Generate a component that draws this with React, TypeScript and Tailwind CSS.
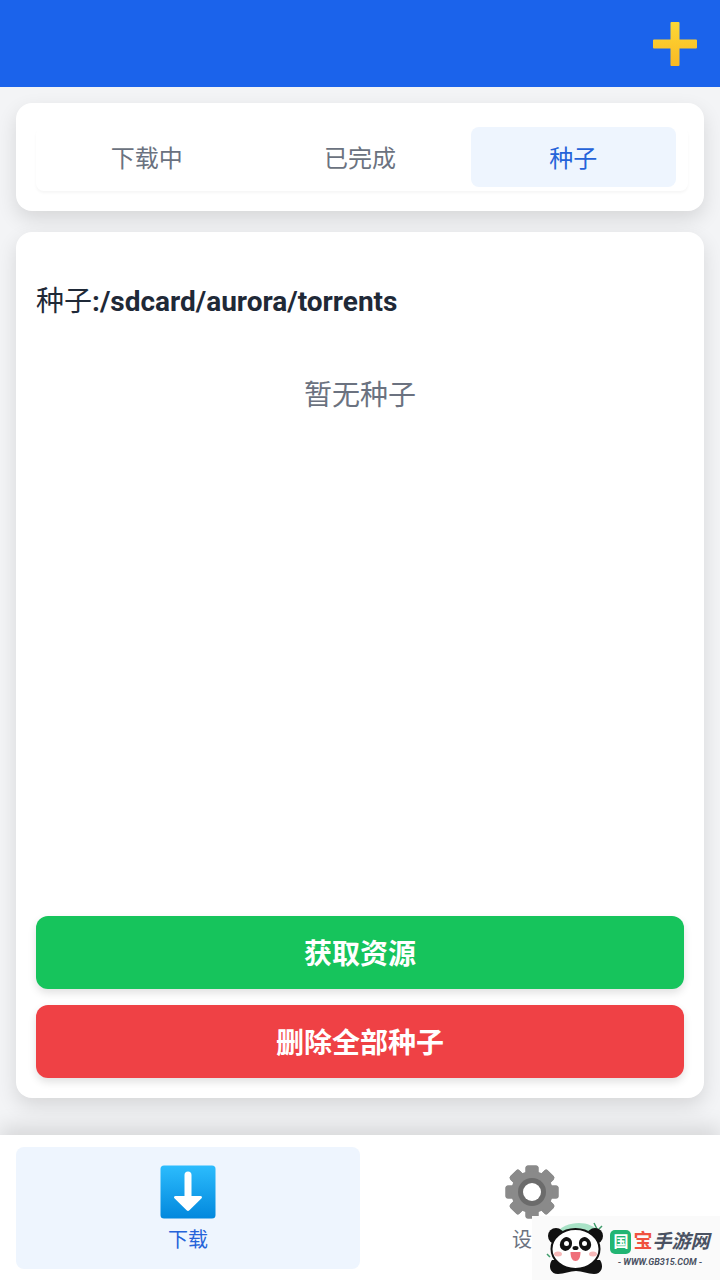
import React from "react";

const PlusIcon = () => (
    <svg width="46" height="46" viewBox="0 0 46 46">
        <defs>
            <linearGradient id="plusFill" x1="0" y1="0" x2="0" y2="1">
                <stop offset="0" stopColor="#fdd835" />
                <stop offset="1" stopColor="#f9b923" />
            </linearGradient>
        </defs>
        <path d="M19.500 1h7a1 1 0 0 1 1 1v16.500H44a1 1 0 0 1 1 1v7a1 1 0 0 1-1 1H27.500V44a1 1 0 0 1-1 1h-7a1 1 0 0 1-1-1V27.500H2a1 1 0 0 1-1-1v-7a1 1 0 0 1 1-1h16.500V2a1 1 0 0 1 1-1z" fill="url(#plusFill)" />
    </svg>
);

const DownloadIcon = () => (
    <svg width="56" height="54" viewBox="0 0 56 54">
        <defs>
            <linearGradient id="dlFill" x1="0" y1="0" x2="0" y2="1">
                <stop offset="0" stopColor="#2cbcfd" />
                <stop offset="1" stopColor="#0288dd" />
            </linearGradient>
        </defs>
        <rect x="0.500" y="0.500" width="55" height="53" rx="3.500" fill="url(#dlFill)" />
        <path d="M24.500 10a3.500 3.500 0 0 1 7 0v21h9c1.300 0 2 1.300 1.100 2.300L29.400 45.200a2 2 0 0 1-2.800 0L14.400 33.300c-.9-1-.2-2.300 1.100-2.300h9z" fill="#ffffff" />
    </svg>
);

const GearIcon = () => (
    <svg width="54" height="54" viewBox="0 0 54 54">
        <g fill="#8a8a8a">
            {[0, 45, 90, 135, 180, 225, 270, 315].map((r) => (
                <rect key={r} x="20.500" y="0.500" width="13" height="53" rx="2.500" transform={`rotate(${r} 27 27)`} />
            ))}
            <circle cx="27" cy="27" r="21" />
        </g>
        <circle cx="27" cy="27" r="14" fill="#6b6b6b" />
        <circle cx="27" cy="27" r="9" fill="#ffffff" />
    </svg>
);

const Panda = () => (
    <svg width="62" height="56" viewBox="0 0 62 56">
        <path d="M8 14C14 4 24 1 33 1c8 0 16 3 22 10l-6 10H12z" fill="#a8e2c6" />
        <path d="M48 1l3 6M56 4l-3 3" stroke="#3f9c6b" strokeWidth="1.500" fill="none" />
        <path d="M1 32l3 3" stroke="#3f9c6b" strokeWidth="1.500" fill="none" />
        <circle cx="10" cy="14" r="8" fill="#111111" />
        <circle cx="49" cy="14" r="8" fill="#111111" />
        <path d="M6 38c-4 6-2 14 6 14 6 0 12-3 18-3s12 3 18 3c8 0 10-8 6-14z" fill="#111111" />
        <ellipse cx="29.500" cy="27" rx="24" ry="20" fill="#ffffff" stroke="#111111" strokeWidth="2" />
        <ellipse cx="20" cy="22" rx="6" ry="7" fill="#111111" transform="rotate(20 20 22)" />
        <ellipse cx="39" cy="22" rx="6" ry="7" fill="#111111" transform="rotate(-20 39 22)" />
        <circle cx="20.500" cy="21.500" r="2.500" fill="#ffffff" />
        <circle cx="38.500" cy="21.500" r="2.500" fill="#ffffff" />
        <ellipse cx="29.500" cy="26" rx="3" ry="2" fill="#111111" />
        <path d="M24.500 30h10c0 6-2 9-5 9s-5-3-5-9z" fill="#ef6f7a" />
        <ellipse cx="12" cy="32" rx="4" ry="2.500" fill="#f7b8b8" />
        <ellipse cx="47" cy="32" rx="4" ry="2.500" fill="#f7b8b8" />
    </svg>
);

const App: React.FC = () => {
    return (
        <div className="relative flex h-[1280px] w-[720px] flex-col overflow-hidden bg-[#f3f4f6] font-['Roboto','Noto_Sans_CJK_SC',sans-serif]">
            <header className="flex h-[87px] shrink-0 items-start justify-end bg-[#1b63eb] pt-[21px] pr-[22px]">
                <PlusIcon />
            </header>

            <main className="flex min-h-0 flex-1 flex-col gap-[21px] px-4 pt-4">
                <section className="h-[108px] shrink-0 rounded-2xl bg-white px-5 pt-6 shadow-[0_8px_20px_rgba(0,0,0,0.12)]">
                    <div className="-mr-1 grid h-[64px] grid-cols-3 rounded-lg pr-2 pb-1 pl-1 shadow-[0_2px_3px_rgba(0,0,0,0.04)]">
                        <div className="flex items-center justify-center pt-[3px] text-2xl text-[#6b7280]">下载中</div>
                        <div className="flex items-center justify-center pt-[3px] text-2xl text-[#6b7280]">已完成</div>
                        <div className="mx-1 flex items-center justify-center rounded-lg bg-[#eef5fe] pt-[3px] text-2xl text-[#2563d9]">种子</div>
                    </div>
                </section>

                <section className="flex h-[866px] shrink-0 flex-col rounded-2xl bg-white px-5 pt-[51px] pb-5 shadow-[0_8px_20px_rgba(0,0,0,0.12)]">
                    <h2 className="text-[28px] leading-[38px] font-bold text-[#1f2937]">
                        <span className="font-normal">种子</span>:/sdcard/aurora/torrents
                    </h2>
                    <p className="mt-[54px] text-center text-[28px] leading-[42px] text-[#6b7280]">暂无种子</p>
                    <div className="mt-auto flex flex-col gap-4">
                        <button className="h-[73px] rounded-xl bg-[#16c45c] pt-1 text-[28px] font-bold text-white shadow-[0_4px_8px_rgba(0,0,0,0.12)]">获取资源</button>
                        <button className="h-[73px] rounded-xl bg-[#ef4145] pt-1 text-[28px] font-bold text-white shadow-[0_4px_8px_rgba(0,0,0,0.12)]">删除全部种子</button>
                    </div>
                </section>
            </main>

            <nav className="flex h-[145px] shrink-0 bg-white px-4 pt-3 pb-[11px] shadow-[0_-8px_20px_rgba(0,0,0,0.12)]">
                <div className="flex flex-1 flex-col items-center rounded-lg bg-[#eef5fe] pt-[18px]">
                    <DownloadIcon />
                    <span className="mt-[6px] text-xl leading-[30px] text-[#2563d9]">下载</span>
                </div>
                <div className="flex flex-1 flex-col items-center pt-[18px]">
                    <GearIcon />
                    <span className="mt-[6px] text-xl leading-[30px] text-[#6b7280]">设置</span>
                </div>
            </nav>

            <div className="absolute right-0 bottom-0 flex h-[64px] w-[188px] items-start bg-[#fafafa] pt-[6px] pl-[14px]">
                <Panda />
                <div className="mt-[8px] flex w-[104px] shrink-0 flex-col items-center">
                    <div className="flex items-center text-[19px] leading-[24px] font-bold whitespace-nowrap">
                        <span className="mr-[2px] flex h-[24px] w-[21px] items-center justify-center rounded-[5px] bg-[#22b573] text-[15px] text-white">国</span>
                        <span className="text-[#f0513f]">宝</span>
                        <span className="text-[#4a5263] italic">手游网</span>
                    </div>
                    <span className="mt-[2px] text-[9px] leading-[12px] font-bold whitespace-nowrap text-[#4a5263] italic">- WWW.GB315.COM -</span>
                </div>
            </div>
        </div>
    );
};

export default App;
